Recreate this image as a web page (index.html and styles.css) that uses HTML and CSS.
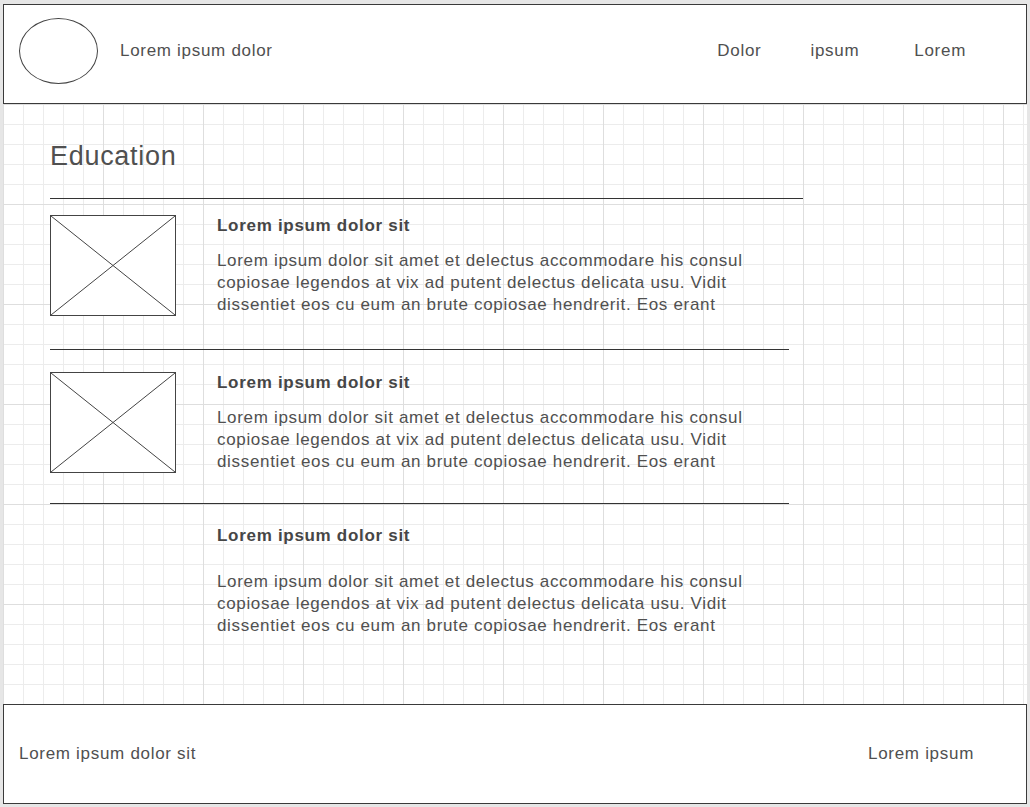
FILE: index.html
```html
<!DOCTYPE html>
<html lang="en">
<head>
<meta charset="utf-8">
<title>Education</title>
<link rel="stylesheet" href="styles.css">
</head>
<body>
<div class="canvas">
  <header class="header">
    <div class="logo"></div>
    <div class="brand">Lorem ipsum dolor</div>
    <nav class="nav">
      <span class="nav-item nav-dolor">Dolor</span>
      <span class="nav-item nav-ipsum">ipsum</span>
      <span class="nav-item">Lorem</span>
    </nav>
  </header>
  <main class="main">
    <h1 class="title">Education</h1>
    <div class="rule rule-top"></div>
    <div class="item item-first">
      <div class="thumb">
        <svg viewBox="0 0 100 100" preserveAspectRatio="none"><line x1="0" y1="0" x2="100" y2="100" vector-effect="non-scaling-stroke"/><line x1="100" y1="0" x2="0" y2="100" vector-effect="non-scaling-stroke"/></svg>
      </div>
      <div class="text">
        <div class="item-title">Lorem ipsum dolor sit</div>
        <p class="item-body">Lorem ipsum dolor sit amet et delectus accommodare his consul copiosae legendos at vix ad putent delectus delicata usu. Vidit dissentiet eos cu eum an brute copiosae hendrerit. Eos erant</p>
      </div>
    </div>
    <div class="rule rule-1"></div>
    <div class="item item-second">
      <div class="thumb">
        <svg viewBox="0 0 100 100" preserveAspectRatio="none"><line x1="0" y1="0" x2="100" y2="100" vector-effect="non-scaling-stroke"/><line x1="100" y1="0" x2="0" y2="100" vector-effect="non-scaling-stroke"/></svg>
      </div>
      <div class="text">
        <div class="item-title">Lorem ipsum dolor sit</div>
        <p class="item-body">Lorem ipsum dolor sit amet et delectus accommodare his consul copiosae legendos at vix ad putent delectus delicata usu. Vidit dissentiet eos cu eum an brute copiosae hendrerit. Eos erant</p>
      </div>
    </div>
    <div class="rule rule-2"></div>
    <div class="item item-third">
      <div class="text no-thumb">
        <div class="item-title">Lorem ipsum dolor sit</div>
        <p class="item-body body-loose">Lorem ipsum dolor sit amet et delectus accommodare his consul copiosae legendos at vix ad putent delectus delicata usu. Vidit dissentiet eos cu eum an brute copiosae hendrerit. Eos erant</p>
      </div>
    </div>
  </main>
  <footer class="footer">
    <span>Lorem ipsum dolor sit</span>
    <span>Lorem ipsum</span>
  </footer>
</div>
</body>
</html>
```

FILE: styles.css
```css
html, body {
  margin: 0;
  background: #e6e6e6;
}
body {
  padding: 4px 0 0 3px;
  font-family: "Liberation Sans", Arial, sans-serif;
  color: #505050;
}
.canvas {
  width: 1024px;
  height: 800px;
  display: flex;
  flex-direction: column;
  background-color: #fff;
  background-image:
    linear-gradient(to right, #dedede 1px, transparent 1px),
    linear-gradient(to bottom, #dedede 1px, transparent 1px),
    linear-gradient(to right, #ececec 1px, transparent 1px),
    linear-gradient(to bottom, #ececec 1px, transparent 1px);
  background-size: 100px 100px, 100px 100px, 20px 20px, 20px 20px;
}
.header {
  box-sizing: border-box;
  height: 100px;
  flex: none;
  display: flex;
  align-items: flex-start;
  padding: 13px 0 0 15px;
  background: #fff;
  border: 1px solid #3a3a3a;
}
.logo {
  box-sizing: border-box;
  width: 79px;
  height: 66px;
  border: 1px solid #444;
  border-radius: 50%;
  flex: none;
}
.brand, .nav-item, .footer span {
  font-size: 17px;
  line-height: 20px;
  letter-spacing: 0.7px;
}
.brand {
  margin: 23px 0 0 22px;
}
.nav {
  display: flex;
  margin: 23px 60px 0 auto;
}
.nav-dolor { margin-right: 49px; }
.nav-ipsum { margin-right: 55px; }

.main {
  box-sizing: border-box;
  height: 600px;
  flex: none;
  padding: 36px 0 0 47px;
}
.title {
  margin: 0;
  font-size: 27px;
  font-weight: normal;
  line-height: 32px;
  letter-spacing: 0.7px;
  color: #505050;
}
.rule {
  height: 0;
  border-top: 1px solid #333;
}
.rule-top { margin-top: 26px; width: 753px; }
.rule-1 { margin-top: 33px; width: 739px; }
.rule-2 { margin-top: 30px; width: 739px; }
.item {
  display: flex;
  align-items: flex-start;
}
.item-first { margin-top: 16px; }
.item-second { margin-top: 22px; }
.item-third { margin-top: 21px; }
.thumb {
  box-sizing: border-box;
  width: 126px;
  height: 101px;
  flex: none;
  border: 1px solid #444;
  background: #fff;
}
.thumb svg {
  display: block;
  width: 100%;
  height: 100%;
}
.thumb line {
  stroke: #444;
  stroke-width: 1;
}
.text {
  margin-left: 41px;
}
.text.no-thumb {
  margin-left: 167px;
}
.item-title {
  margin-top: 1px;
  font-size: 17px;
  font-weight: bold;
  line-height: 20px;
  letter-spacing: 0.7px;
  color: #464646;
}
.item-body {
  width: 545px;
  margin: 14px 0 0;
  font-size: 17px;
  line-height: 22px;
  letter-spacing: 0.67px;
  color: #505050;
}
.item-body.body-loose {
  margin-top: 25px;
}
.footer {
  box-sizing: border-box;
  height: 100px;
  flex: none;
  display: flex;
  align-items: center;
  justify-content: space-between;
  padding: 0 52px 0 15px;
  background: #fff;
  border: 1px solid #3a3a3a;
}
```
